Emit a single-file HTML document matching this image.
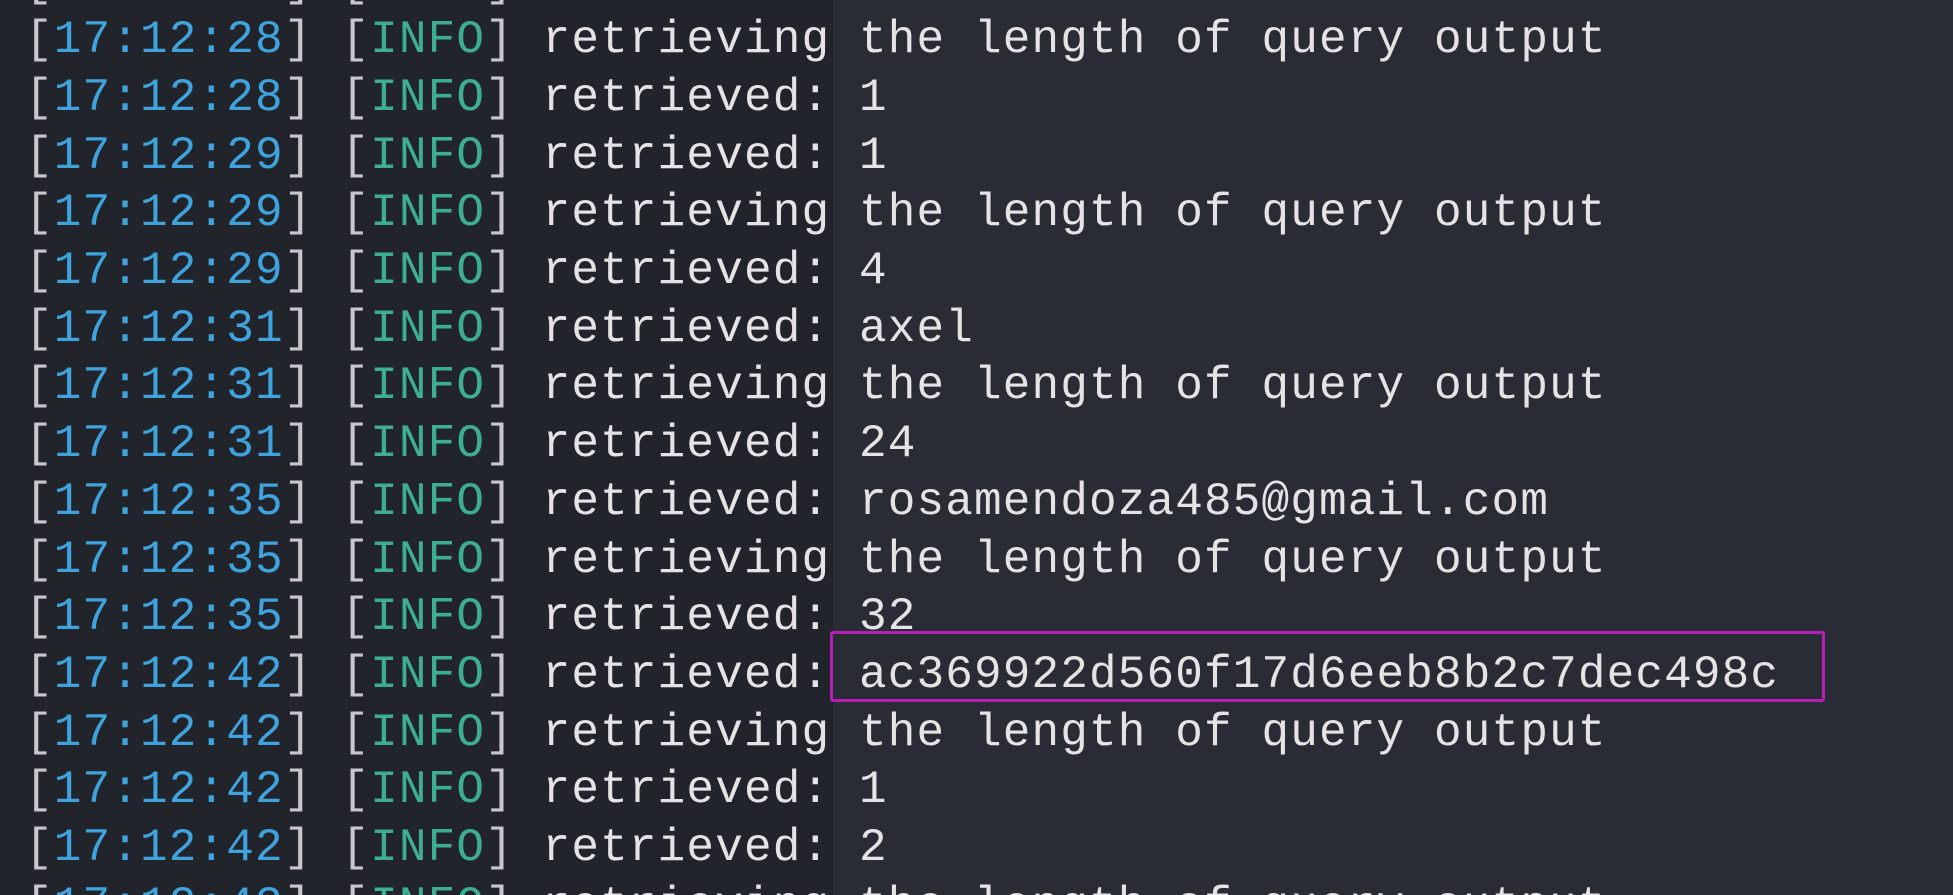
<!DOCTYPE html>
<html><head><style>
html,body{margin:0;padding:0;width:1953px;height:895px;overflow:hidden;background:#2a2c35;}
.w{position:relative;width:1953px;height:895px;overflow:hidden;}
.l{position:absolute;left:0;top:0;width:833px;height:895px;background:#22242c;}
.t{position:absolute;left:25px;top:-45.5px;font-family:"Liberation Mono",monospace;font-size:46px;letter-spacing:1.15px;line-height:57.7px;color:#e4e4e6;white-space:pre;}
.b{color:#c8c8cc}.ts{color:#3fa3dd}.i{color:#3eae93}
.box{position:absolute;left:830px;top:631px;width:995px;height:71px;border:3px solid #b51fb5;border-radius:3px;box-sizing:border-box;}
</style></head><body><div class="w">
<div class="l"></div>
<div class="t"><span class="b">[</span><span class="ts">17:12:28</span><span class="b">]</span> <span class="b">[</span><span class="i">INFO</span><span class="b">]</span> retrieved: 0
<span class="b">[</span><span class="ts">17:12:28</span><span class="b">]</span> <span class="b">[</span><span class="i">INFO</span><span class="b">]</span> retrieving the length of query output
<span class="b">[</span><span class="ts">17:12:28</span><span class="b">]</span> <span class="b">[</span><span class="i">INFO</span><span class="b">]</span> retrieved: 1
<span class="b">[</span><span class="ts">17:12:29</span><span class="b">]</span> <span class="b">[</span><span class="i">INFO</span><span class="b">]</span> retrieved: 1
<span class="b">[</span><span class="ts">17:12:29</span><span class="b">]</span> <span class="b">[</span><span class="i">INFO</span><span class="b">]</span> retrieving the length of query output
<span class="b">[</span><span class="ts">17:12:29</span><span class="b">]</span> <span class="b">[</span><span class="i">INFO</span><span class="b">]</span> retrieved: 4
<span class="b">[</span><span class="ts">17:12:31</span><span class="b">]</span> <span class="b">[</span><span class="i">INFO</span><span class="b">]</span> retrieved: axel
<span class="b">[</span><span class="ts">17:12:31</span><span class="b">]</span> <span class="b">[</span><span class="i">INFO</span><span class="b">]</span> retrieving the length of query output
<span class="b">[</span><span class="ts">17:12:31</span><span class="b">]</span> <span class="b">[</span><span class="i">INFO</span><span class="b">]</span> retrieved: 24
<span class="b">[</span><span class="ts">17:12:35</span><span class="b">]</span> <span class="b">[</span><span class="i">INFO</span><span class="b">]</span> retrieved: rosamendoza485@gmail.com
<span class="b">[</span><span class="ts">17:12:35</span><span class="b">]</span> <span class="b">[</span><span class="i">INFO</span><span class="b">]</span> retrieving the length of query output
<span class="b">[</span><span class="ts">17:12:35</span><span class="b">]</span> <span class="b">[</span><span class="i">INFO</span><span class="b">]</span> retrieved: 32
<span class="b">[</span><span class="ts">17:12:42</span><span class="b">]</span> <span class="b">[</span><span class="i">INFO</span><span class="b">]</span> retrieved: ac369922d560f17d6eeb8b2c7dec498c
<span class="b">[</span><span class="ts">17:12:42</span><span class="b">]</span> <span class="b">[</span><span class="i">INFO</span><span class="b">]</span> retrieving the length of query output
<span class="b">[</span><span class="ts">17:12:42</span><span class="b">]</span> <span class="b">[</span><span class="i">INFO</span><span class="b">]</span> retrieved: 1
<span class="b">[</span><span class="ts">17:12:42</span><span class="b">]</span> <span class="b">[</span><span class="i">INFO</span><span class="b">]</span> retrieved: 2
<span class="b">[</span><span class="ts">17:12:43</span><span class="b">]</span> <span class="b">[</span><span class="i">INFO</span><span class="b">]</span> retrieving the length of query output</div>
<div class="box"></div>
</div></body></html>
